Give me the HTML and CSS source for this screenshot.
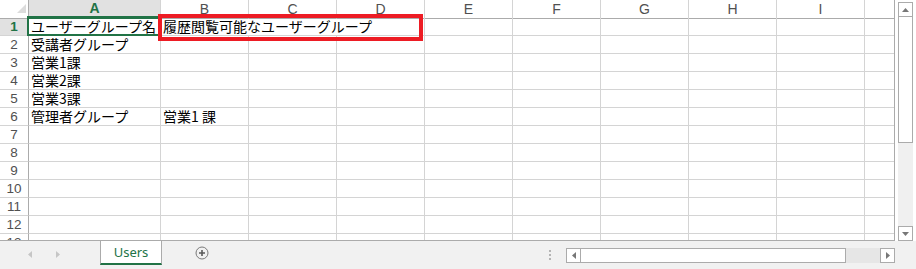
FILE: index.html
```html
<!DOCTYPE html>
<html lang="ja">
<head>
<meta charset="utf-8">
<title>Users</title>
<link rel="stylesheet" href="styles.css">
</head>
<body>
<div class="app">
  <div class="top">
    <div class="sheet">
      <div class="row head">
        <div class="corner"><svg class="corner-tri" width="29" height="18" viewBox="0 0 29 18"><polygon points="17,13 26,13 26,4" fill="#dcdcdc"/></svg></div>
        <div class="ch sel">A</div>
        <div class="ch">B</div>
        <div class="ch">C</div>
        <div class="ch">D</div>
        <div class="ch">E</div>
        <div class="ch">F</div>
        <div class="ch">G</div>
        <div class="ch">H</div>
        <div class="ch">I</div>
        <div class="ch last"></div>
      </div>
      <div class="row">
        <div class="rh sel">1</div>
        <div class="c">ユーザーグループ名</div>
        <div class="c span3">履歴閲覧可能なユーザーグループ</div>
        <div class="c"></div><div class="c"></div><div class="c"></div><div class="c"></div><div class="c"></div>
        <div class="c last"></div>
      </div>
      <div class="row">
        <div class="rh">2</div>
        <div class="c">受講者グループ</div>
        <div class="c"></div><div class="c"></div><div class="c"></div><div class="c"></div><div class="c"></div><div class="c"></div><div class="c"></div><div class="c"></div>
        <div class="c last"></div>
      </div>
      <div class="row">
        <div class="rh">3</div>
        <div class="c">営業1課</div>
        <div class="c"></div><div class="c"></div><div class="c"></div><div class="c"></div><div class="c"></div><div class="c"></div><div class="c"></div><div class="c"></div>
        <div class="c last"></div>
      </div>
      <div class="row">
        <div class="rh">4</div>
        <div class="c">営業2課</div>
        <div class="c"></div><div class="c"></div><div class="c"></div><div class="c"></div><div class="c"></div><div class="c"></div><div class="c"></div><div class="c"></div>
        <div class="c last"></div>
      </div>
      <div class="row">
        <div class="rh">5</div>
        <div class="c">営業3課</div>
        <div class="c"></div><div class="c"></div><div class="c"></div><div class="c"></div><div class="c"></div><div class="c"></div><div class="c"></div><div class="c"></div>
        <div class="c last"></div>
      </div>
      <div class="row">
        <div class="rh">6</div>
        <div class="c">管理者グループ</div>
        <div class="c">営業1 課</div>
        <div class="c"></div><div class="c"></div><div class="c"></div><div class="c"></div><div class="c"></div><div class="c"></div><div class="c"></div>
        <div class="c last"></div>
      </div>
      <div class="row">
        <div class="rh">7</div>
        <div class="c"></div><div class="c"></div><div class="c"></div><div class="c"></div><div class="c"></div><div class="c"></div><div class="c"></div><div class="c"></div><div class="c"></div>
        <div class="c last"></div>
      </div>
      <div class="row">
        <div class="rh">8</div>
        <div class="c"></div><div class="c"></div><div class="c"></div><div class="c"></div><div class="c"></div><div class="c"></div><div class="c"></div><div class="c"></div><div class="c"></div>
        <div class="c last"></div>
      </div>
      <div class="row">
        <div class="rh">9</div>
        <div class="c"></div><div class="c"></div><div class="c"></div><div class="c"></div><div class="c"></div><div class="c"></div><div class="c"></div><div class="c"></div><div class="c"></div>
        <div class="c last"></div>
      </div>
      <div class="row">
        <div class="rh">10</div>
        <div class="c"></div><div class="c"></div><div class="c"></div><div class="c"></div><div class="c"></div><div class="c"></div><div class="c"></div><div class="c"></div><div class="c"></div>
        <div class="c last"></div>
      </div>
      <div class="row">
        <div class="rh">11</div>
        <div class="c"></div><div class="c"></div><div class="c"></div><div class="c"></div><div class="c"></div><div class="c"></div><div class="c"></div><div class="c"></div><div class="c"></div>
        <div class="c last"></div>
      </div>
      <div class="row">
        <div class="rh">12</div>
        <div class="c"></div><div class="c"></div><div class="c"></div><div class="c"></div><div class="c"></div><div class="c"></div><div class="c"></div><div class="c"></div><div class="c"></div>
        <div class="c last"></div>
      </div>
      <div class="row">
        <div class="rh">13</div>
        <div class="c"></div><div class="c"></div><div class="c"></div><div class="c"></div><div class="c"></div><div class="c"></div><div class="c"></div><div class="c"></div><div class="c"></div>
        <div class="c last"></div>
      </div>
      <div class="selbox"></div>
      <div class="mark"></div>
    </div>
    <div class="vscroll">
      <div class="vbtn"><svg width="7" height="4" viewBox="0 0 7 4"><polygon points="0,4 7,4 3.5,0" fill="#777"/></svg></div>
      <div class="vthumb"></div>
      <div class="vtrack"></div>
      <div class="vbtn"><svg width="7" height="4" viewBox="0 0 7 4"><polygon points="0,0 7,0 3.5,4" fill="#777"/></svg></div>
    </div>
  </div>
  <div class="tabbar">
    <div class="nav">
      <svg width="4" height="7" viewBox="0 0 4 7"><polygon points="4,0 4,7 0,3.5" fill="#c6c6c6"/></svg>
      <svg width="4" height="7" viewBox="0 0 4 7"><polygon points="0,0 0,7 4,3.5" fill="#c6c6c6"/></svg>
    </div>
    <div class="tab">Users</div>
    <svg class="add" width="14" height="14" viewBox="0 0 14 14"><circle cx="7" cy="7" r="6" fill="none" stroke="#7a7a7a" stroke-width="1"/><path d="M7 4v6M4 7h6" stroke="#5a5a5a" stroke-width="1.6"/></svg>
    <div class="hs-area">
      <svg class="dots" width="2" height="10" viewBox="0 0 2 10"><rect x="0" y="0" width="2" height="2" fill="#b4b4b4"/><rect x="0" y="4" width="2" height="2" fill="#b4b4b4"/><rect x="0" y="8" width="2" height="2" fill="#b4b4b4"/></svg>
      <div class="hscroll">
        <div class="hbtn"><svg width="4" height="7" viewBox="0 0 4 7"><polygon points="4,0 4,7 0,3.5" fill="#777"/></svg></div>
        <div class="hthumb"></div>
        <div class="htrack"></div>
        <div class="hbtn"><svg width="4" height="7" viewBox="0 0 4 7"><polygon points="0,0 0,7 4,3.5" fill="#777"/></svg></div>
      </div>
    </div>
  </div>
</div>
</body>
</html>
```

FILE: styles.css
```css
* {
  box-sizing: border-box;
}

html,
body {
  margin: 0;
  padding: 0;
  background: #ffffff;
}

.app {
  width: 916px;
  height: 269px;
  display: flex;
  flex-direction: column;
  overflow: hidden;
  font-family: "Noto Sans CJK JP", "Noto Sans", sans-serif;
}

.top {
  display: flex;
  height: 241px;
  flex: none;
}

.sheet {
  position: relative;
  width: 895px;
  height: 241px;
  border-right: 1px solid #ababab;
  border-bottom: 1px solid #ababab;
  overflow: hidden;
  flex: none;
}

.row {
  display: grid;
  grid-template-columns: 29px 132px repeat(8, 88px) 29px;
  height: 18px;
}

.row > div {
  border-right: 1px solid #d4d4d4;
  border-bottom: 1px solid #d4d4d4;
  white-space: nowrap;
  overflow: visible;
}

.row > .last {
  border-right: none;
}

.c {
  font-size: 14px;
  line-height: 17px;
  padding-left: 2px;
  color: #000000;
}

.span3 {
  grid-column: span 3;
}

.row.head > div {
  border-bottom-color: #ababab;
  font-family: "Liberation Sans", Arial, sans-serif;
  font-size: 14px;
  line-height: 18px;
  text-align: center;
  color: #505050;
}

.row.head > .corner {
  border-right-color: #ababab;
  position: relative;
}

.corner-tri {
  display: block;
}

.row.head > .sel {
  background: #e1e1e1;
  color: #217346;
  font-weight: 700;
  border-bottom: 2px solid #217346;
  line-height: 17px;
}

.row > .rh {
  border-right-color: #ababab;
  font-family: "Liberation Sans", Arial, sans-serif;
  font-size: 13.5px;
  line-height: 17px;
  text-align: center;
  color: #505050;
}

.row > .rh.sel {
  background: #e1e1e1;
  color: #217346;
  font-weight: 700;
}

.selbox {
  position: absolute;
  left: 27px;
  top: 16px;
  width: 133px;
  height: 20px;
  border: 2px solid #217346;
}

.mark {
  position: absolute;
  left: 158px;
  top: 14px;
  width: 265px;
  height: 27px;
  border: 4px solid #ed1c24;
}

.vscroll {
  width: 15px;
  height: 239px;
  margin-left: 3px;
  margin-top: 2px;
  display: flex;
  flex-direction: column;
  flex: none;
}

.vbtn {
  height: 15px;
  flex: none;
  border: 1px solid #ababab;
  background: #ffffff;
  display: flex;
  align-items: center;
  justify-content: center;
}

.vbtn svg,
.hbtn svg {
  display: block;
}

.vthumb {
  height: 126px;
  flex: none;
  border: 1px solid #ababab;
  border-top: none;
  background: #ffffff;
}

.vtrack {
  flex: 1;
  background: #f0f0f0;
}

.tabbar {
  height: 28px;
  flex: none;
  background: #f1f1f1;
  display: flex;
  align-items: flex-start;
}

.nav {
  width: 100px;
  height: 28px;
  flex: none;
  display: flex;
  align-items: center;
  gap: 24px;
  padding-left: 28px;
  padding-bottom: 1px;
}

.nav svg {
  display: block;
}

.tab {
  width: 62px;
  height: 24px;
  flex: none;
  background: #ffffff;
  border-left: 1px solid #ababab;
  border-right: 1px solid #ababab;
  border-bottom: 2px solid #217346;
  color: #217346;
  font-family: "Noto Sans", sans-serif;
  font-size: 13px;
  line-height: 22px;
  text-align: center;
}

.add {
  display: block;
  flex: none;
  margin-left: 33px;
  margin-top: 5px;
}

.hs-area {
  margin-left: auto;
  margin-right: 21px;
  display: flex;
  align-items: flex-start;
}

.dots {
  display: block;
  margin-top: 9px;
  margin-right: 15px;
}

.hscroll {
  width: 329px;
  height: 15px;
  margin-top: 7px;
  display: flex;
}

.hbtn {
  width: 15px;
  flex: none;
  border: 1px solid #ababab;
  background: #ffffff;
  display: flex;
  align-items: center;
  justify-content: center;
}

.hthumb {
  width: 265px;
  flex: none;
  border: 1px solid #ababab;
  border-left: none;
  background: #ffffff;
}

.htrack {
  flex: 1;
  background: #e6e6e6;
}
```
